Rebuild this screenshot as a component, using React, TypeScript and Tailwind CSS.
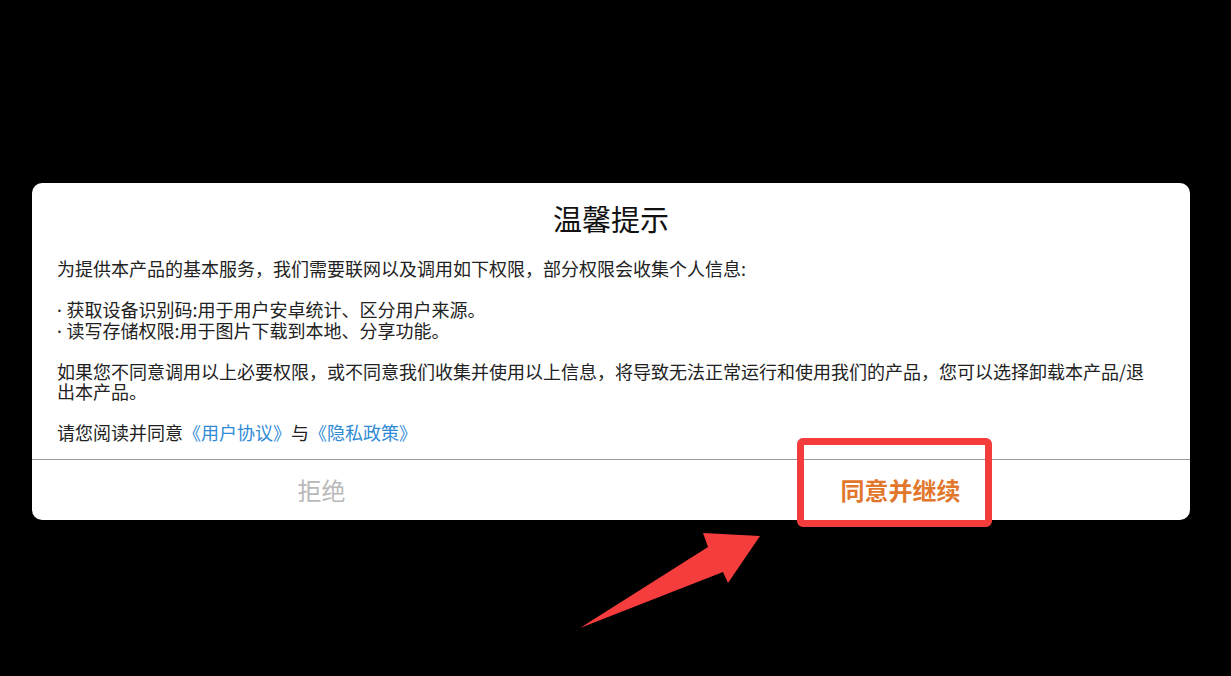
import React from "react";

export default function App() {
  const font = {
    fontFamily: '"Noto Sans CJK SC", "Noto Sans", sans-serif',
  };
  const dot = { fontFamily: '"Noto Sans", sans-serif' };
  return (
    <div
      className="relative w-[1231px] h-[676px] bg-black overflow-hidden pt-[183px] pl-[32px]"
      style={font}
    >
      <div className="w-[1158px] bg-white rounded-[10px] overflow-hidden">
        <div className="pt-[20px] pl-[25px] pr-[35px] pb-[16px]">
          <div className="text-center text-[29px] leading-[30px] text-[#111] pl-[10px]">温馨提示</div>
          <div className="mt-[25px] text-[18px] leading-[20.5px] text-[#222]">
            <div>为提供本产品的基本服务，我们需要联网以及调用如下权限，部分权限会收集个人信息:</div>
            <div className="mt-[20.5px] h-[20.5px]">
              <span className="leading-none" style={dot}>·&nbsp;</span>获取设备识别码:用于用户安卓统计、区分用户来源。
            </div>
            <div className="h-[20.5px]">
              <span className="leading-none" style={dot}>·&nbsp;</span>读写存储权限:用于图片下载到本地、分享功能。
            </div>
            <div className="mt-[20.5px]">
              如果您不同意调用以上必要权限，或不同意我们收集并使用以上信息，将导致无法正常运行和使用我们的产品，您可以选择卸载本产品/退出本产品。
            </div>
            <div className="mt-[20.5px]">
              请您阅读并同意<span className="text-[#2f8bd6]">《用户协议》</span>与
              <span className="text-[#2f8bd6]">《隐私政策》</span>
            </div>
          </div>
        </div>
        <div className="grid grid-cols-2 h-[61px] border-t border-[#9a9a9a]">
          <div className="flex items-center justify-center text-[24px] text-[#b9b9b9]">拒绝</div>
          <div className="flex items-center justify-center text-[24px] font-bold text-[#e2772c]">
            同意并继续
          </div>
        </div>
      </div>

      {/* annotation: red highlight box */}
      <div className="absolute left-[797px] top-[438px] w-[195px] h-[89px] border-[7px] border-[#f53c3c] rounded-[6px]" />

      {/* annotation: arrow */}
      <svg
        className="absolute left-0 top-0"
        width="1231"
        height="676"
        viewBox="0 0 1231 676"
      >
        <polygon
          points="580,628 708,547 703,533 760,536 728,583 723,572"
          fill="#f63d3d"
        />
      </svg>
    </div>
  );
}
